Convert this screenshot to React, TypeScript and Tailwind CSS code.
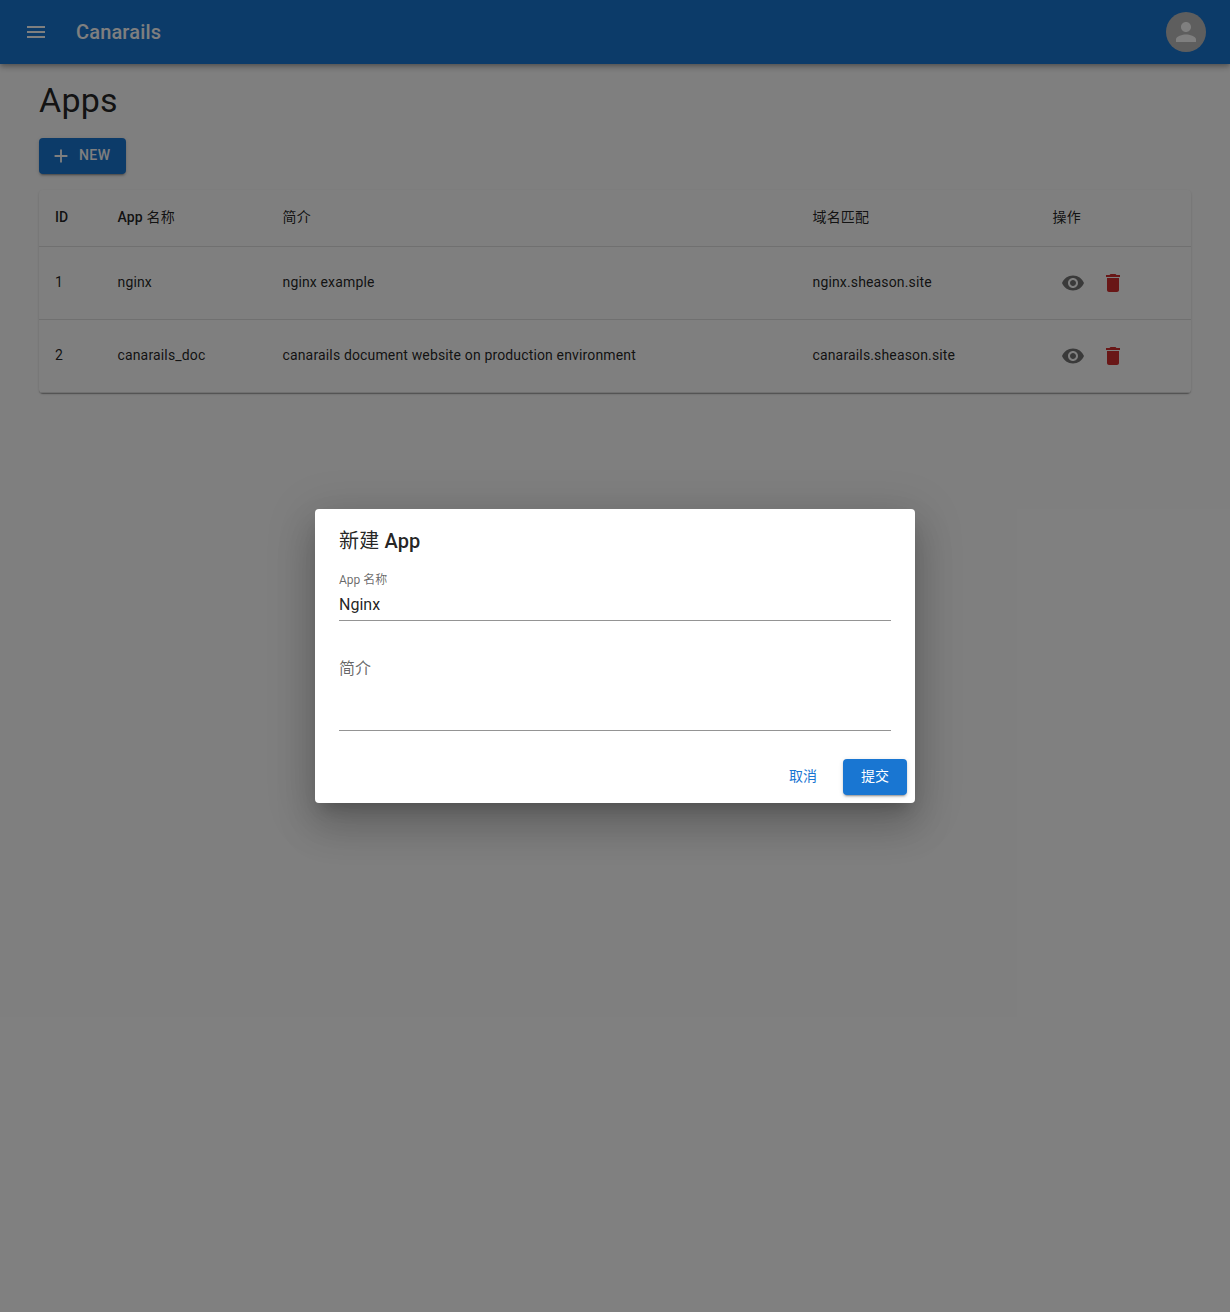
import React from "react";

const font = "font-['Roboto','Noto_Sans_CJK_SC',sans-serif]";

function Icon({ d, className }: { d: string; className?: string }) {
  return (
    <svg viewBox="0 0 24 24" fill="currentColor" className={className}>
      <path d={d} />
    </svg>
  );
}

const MENU = "M3 18h18v-2H3v2zm0-5h18v-2H3v2zm0-7v2h18V6H3z";
const PERSON = "M12 12c2.21 0 4-1.79 4-4s-1.79-4-4-4-4 1.79-4 4 1.79 4 4 4zm0 2c-2.67 0-8 1.34-8 4v2h16v-2c0-2.66-5.33-4-8-4z";
const ADD = "M19 13h-6v6h-2v-6H5v-2h6V5h2v6h6v2z";
const EYE = "M12 4.5C7 4.5 2.73 7.61 1 12c1.73 4.39 6 7.5 11 7.5s9.27-3.11 11-7.5c-1.73-4.39-6-7.5-11-7.5zM12 17c-2.76 0-5-2.24-5-5s2.24-5 5-5 5 2.24 5 5-2.24 5-5 5zm0-8c-1.66 0-3 1.34-3 3s1.34 3 3 3 3-1.34 3-3-1.34-3-3-3z";
const TRASH = "M6 19c0 1.1.9 2 2 2h8c1.1 0 2-.9 2-2V7H6v12zM19 4h-3.5l-1-1h-5l-1 1H5v2h14V4z";

const cols = "grid grid-cols-[62.5px_165px_530px_240px_154.5px] items-center";
const cell = "pl-4 pb-[2px] tracking-[0.15px]";

const apps = [
  { id: 1, name: "nginx", desc: "nginx example", host: "nginx.sheason.site" },
  { id: 2, name: "canarails_doc", desc: "canarails document website on production environment", host: "canarails.sheason.site" },
];

function Row({ app }: { app: (typeof apps)[number] }) {
  return (
    <div className={`${cols} h-[73px] border-b border-[#e0e0e0] text-[14px] text-black/[.87]`}>
      <div className={cell}>{app.id}</div>
      <div className={cell}>{app.name}</div>
      <div className={cell}>{app.desc}</div>
      <div className={cell}>{app.host}</div>
      <div className="flex items-center pl-4">
        <span className="flex w-10 h-10 items-center justify-center text-black/[.54]">
          <Icon d={EYE} className="w-6 h-6" />
        </span>
        <span className="flex w-10 h-10 items-center justify-center text-[#d32f2f]">
          <Icon d={TRASH} className="w-6 h-6" />
        </span>
      </div>
    </div>
  );
}

export default function App() {
  return (
    <div className={`relative h-screen overflow-hidden bg-white ${font}`}>
      <header className="flex h-16 items-center bg-[#1976d2] px-6 text-white shadow-[0_2px_4px_-1px_rgba(0,0,0,0.2),0_4px_5px_0_rgba(0,0,0,0.14),0_1px_10px_0_rgba(0,0,0,0.12)]">
        <Icon d={MENU} className="w-6 h-6" />
        <h1 className="ml-7 text-[20px] font-medium leading-8 tracking-[0.15px]">Canarails</h1>
        <div className="ml-auto flex w-10 h-10 items-center justify-center rounded-full bg-[#bdbdbd]">
          <Icon d={PERSON} className="w-[30px] h-[30px]" />
        </div>
      </header>

      <main className="px-[39px]">
        <h2 className="mt-[14px] text-[34px] leading-[44px] text-black/[.87] tracking-[0.25px]">Apps</h2>
        <button className="mt-4 flex h-9 w-[87px] items-center rounded bg-[#1976d2] pb-[2px] pl-[11px] text-[14px] font-medium tracking-[0.4px] text-white shadow-[0_3px_1px_-2px_rgba(0,0,0,0.2),0_2px_2px_0_rgba(0,0,0,0.14),0_1px_5px_0_rgba(0,0,0,0.12)]">
          <Icon d={ADD} className="w-[22px] h-[22px] mt-[2px]" />
          <span className="ml-[7px]">NEW</span>
        </button>

        <div className="mt-4 rounded bg-white shadow-[0_2px_1px_-1px_rgba(0,0,0,0.2),0_1px_1px_0_rgba(0,0,0,0.14),0_1px_3px_0_rgba(0,0,0,0.12)]">
          <div className={`${cols} h-[57px] border-b border-[#e0e0e0] text-[14px] font-medium text-black/[.87]`}>
            <div className={cell}>ID</div>
            <div className={cell}>App <span className="font-normal">名称</span></div>
            <div className={`${cell} font-normal`}>简介</div>
            <div className={`${cell} font-normal`}>域名匹配</div>
            <div className={`${cell} font-normal`}>操作</div>
          </div>
          {apps.map((app) => (
            <Row key={app.id} app={app} />
          ))}
        </div>
      </main>

      <div className="absolute inset-0 flex items-center justify-center bg-black/50">
        <div className="w-[600px] h-[294px] flex flex-col rounded bg-white shadow-[0_11px_15px_-7px_rgba(0,0,0,0.2),0_24px_38px_3px_rgba(0,0,0,0.14),0_9px_46px_8px_rgba(0,0,0,0.12)]">
          <h3 className="px-6 pt-4 text-[20px] font-medium leading-8 tracking-[0.15px] text-black/[.87]"><span className="font-normal">新建</span> App</h3>
          <div className="px-6 pt-[16px]">
            <div className="text-[12px] leading-[15px] text-black/60">App 名称</div>
            <div className="h-[33px] border-b border-black/[.42] pt-[7px] text-[16px] leading-5 text-black/[.87]">Nginx</div>
          </div>
          <div className="px-6 pt-[36px]">
            <div className="h-[74px] border-b border-black/[.42] text-[16px] leading-[24px] text-black/60">简介</div>
          </div>
          <div className="mt-auto flex items-center justify-end gap-2 p-2">
            <button className="h-9 w-16 rounded pb-[2px] text-[14px] text-[#1976d2]">取消</button>
            <button className="h-9 w-16 rounded bg-[#1976d2] pb-[2px] text-[14px] text-white shadow-[0_3px_1px_-2px_rgba(0,0,0,0.2),0_2px_2px_0_rgba(0,0,0,0.14),0_1px_5px_0_rgba(0,0,0,0.12)]">提交</button>
          </div>
        </div>
      </div>
    </div>
  );
}
